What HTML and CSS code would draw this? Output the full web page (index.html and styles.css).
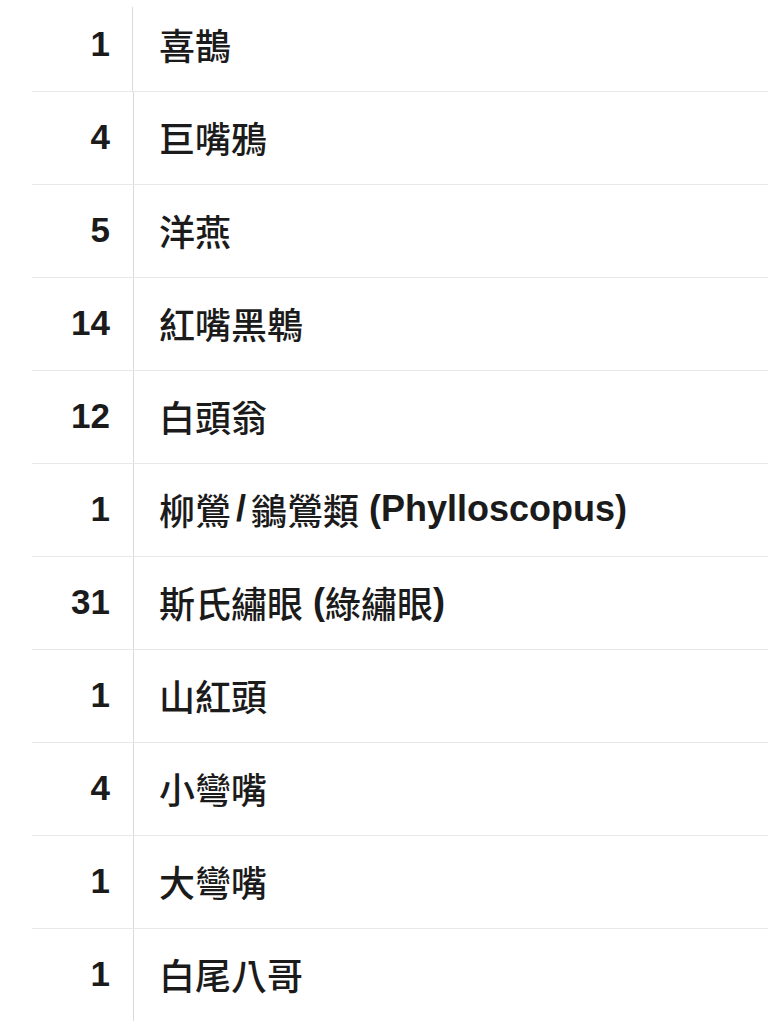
FILE: index.html
```html
<!DOCTYPE html>
<html lang="zh-Hant">
<head>
<meta charset="utf-8">
<title>Bird list</title>
<link rel="stylesheet" href="styles.css">
</head>
<body>
<div class="list">
  <div class="row"><div class="num">1</div><div class="name">喜鵲</div></div>
  <div class="row"><div class="num">4</div><div class="name">巨嘴鴉</div></div>
  <div class="row"><div class="num">5</div><div class="name">洋燕</div></div>
  <div class="row"><div class="num">14</div><div class="name">紅嘴黑鵯</div></div>
  <div class="row"><div class="num">12</div><div class="name">白頭翁</div></div>
  <div class="row"><div class="num">1</div><div class="name">柳鶯<span class="lat sl">/</span>鶲鶯類<span class="lat"> (Phylloscopus)</span></div></div>
  <div class="row"><div class="num">31</div><div class="name">斯氏繡眼<span class="lat"> (</span>綠繡眼<span class="lat">)</span></div></div>
  <div class="row"><div class="num">1</div><div class="name">山紅頭</div></div>
  <div class="row"><div class="num">4</div><div class="name">小彎嘴</div></div>
  <div class="row"><div class="num">1</div><div class="name">大彎嘴</div></div>
  <div class="row"><div class="num">1</div><div class="name">白尾八哥</div></div>
</div>
</body>
</html>
```
FILE: styles.css
```css
html, body {
  margin: 0;
  padding: 0;
  background: #ffffff;
}
body {
  font-family: "Liberation Sans", "Noto Sans CJK TC", sans-serif;
  color: #1b1b1b;
  overflow: hidden;
}
.list {
  margin-top: -1px;
  margin-left: 32px;
}
.row {
  display: grid;
  grid-template-columns: 102px 1fr;
  height: 92px;
  border-bottom: 1px solid #e8e8e8;
}
.row:last-child {
  border-bottom: none;
}
.num {
  display: flex;
  align-items: center;
  justify-content: flex-end;
  padding-right: 23px;
  padding-bottom: 2px;
  font-size: 35px;
  font-weight: bold;
  border-right: 1px solid #dadada;
}
.row:first-child .num {
  border-right-color: transparent;
  background: linear-gradient(#dadada, #dadada) right 8px / 1px 100% no-repeat;
}
.name {
  display: flex;
  align-items: center;
  padding-left: 25px;
  padding-bottom: 3px;
  font-family: "Noto Sans CJK TC", sans-serif;
  font-size: 36px;
  font-weight: 500;
  white-space: pre;
}
.lat {
  font-family: "Liberation Sans", "Noto Sans CJK TC", sans-serif;
  font-weight: bold;
}
.sl {
  margin: 0 5px;
}
```
